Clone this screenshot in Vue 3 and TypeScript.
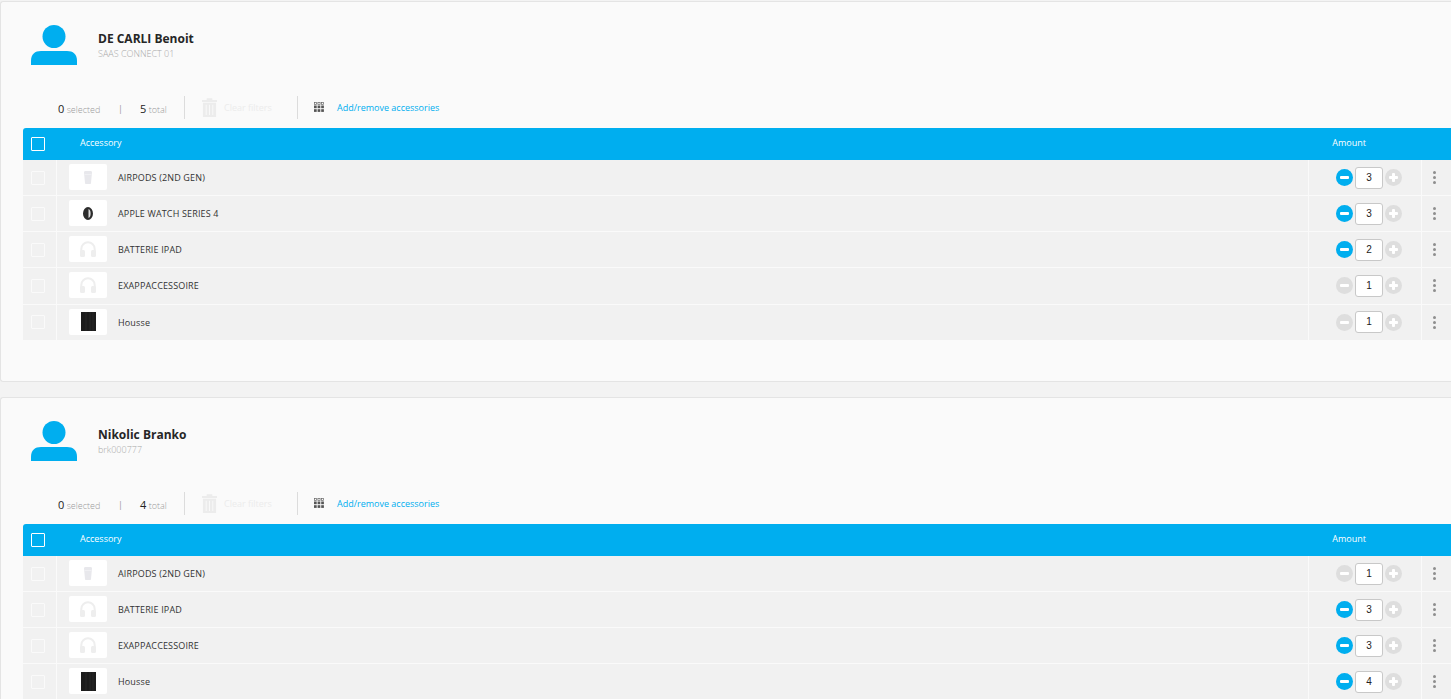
<script setup lang="ts">
interface Row { name: string; amount: number; icon: string; minus: boolean }
interface Card { name: string; sub: string; total: number; rows: Row[] }
const cards: Card[] = [
  { name: 'DE CARLI Benoit', sub: 'SAAS CONNECT 01', total: 5, rows: [
    { name: 'AIRPODS (2ND GEN)', amount: 3, icon: 'pods', minus: true },
    { name: 'APPLE WATCH SERIES 4', amount: 3, icon: 'watch', minus: true },
    { name: 'BATTERIE IPAD', amount: 2, icon: 'phones', minus: true },
    { name: 'EXAPPACCESSOIRE', amount: 1, icon: 'phones', minus: false },
    { name: 'Housse', amount: 1, icon: 'case', minus: false },
  ] },
  { name: 'Nikolic Branko', sub: 'brk000777', total: 4, rows: [
    { name: 'AIRPODS (2ND GEN)', amount: 1, icon: 'pods', minus: false },
    { name: 'BATTERIE IPAD', amount: 3, icon: 'phones', minus: true },
    { name: 'EXAPPACCESSOIRE', amount: 3, icon: 'phones', minus: true },
    { name: 'Housse', amount: 4, icon: 'case', minus: true },
  ] },
]
</script>

<template>
  <div class="page">
    <section v-for="card in cards" :key="card.name" class="card">
      <header class="user">
        <svg class="avatar" width="46" height="40" viewBox="0 0 46 40">
          <circle cx="23" cy="11.5" r="11.5" fill="#00aeef" />
          <path d="M0 40V36C0 29 4 26 10 26H36C42 26 46 29 46 36V40Z" fill="#00aeef" />
        </svg>
        <div class="who">
          <div class="name">{{ card.name }}</div>
          <div class="sub">{{ card.sub }}</div>
        </div>
      </header>
      <div class="tools">
        <div class="count sel"><b>0</b> selected</div>
        <span class="pipe">|</span>
        <div class="count tot"><b>{{ card.total }}</b> total</div>
        <span class="vline first"></span>
        <svg class="trash" width="15" height="19" viewBox="0 0 16 20">
          <path fill="#ececec" d="M5 0H11V2H16V4H0V2H5ZM1 5H15V20H1ZM4 7V18H5V7ZM7.500 7V18H8.500V7ZM11 7V18H12V7Z" fill-rule="evenodd" />
        </svg>
        <span class="clear">Clear filters</span>
        <span class="vline second"></span>
        <svg class="grid" width="10" height="10" viewBox="0 0 10 10">
          <g fill="none" stroke="#666" stroke-width=".7">
            <rect x=".4" y=".4" width="2.200" height="2" /><rect x="3.900" y=".4" width="2.200" height="2" /><rect x="7.400" y=".4" width="2.200" height="2" />
          </g>
          <g fill="#555">
            <rect y="3.500" width="2.700" height="2.700" /><rect x="3.600" y="3.500" width="2.700" height="2.700" /><rect x="7.200" y="3.500" width="2.700" height="2.700" />
            <rect y="7.200" width="2.700" height="2.700" /><rect x="3.600" y="7.200" width="2.700" height="2.700" /><rect x="7.200" y="7.200" width="2.700" height="2.700" />
          </g>
        </svg>
        <a class="add">Add/remove accessories</a>
      </div>
      <div class="table">
        <div class="thead">
          <span class="check head-check"></span>
          <span class="th-name">Accessory</span>
          <span class="th-amount">Amount</span>
        </div>
        <div v-for="row in card.rows" :key="row.name" class="row">
          <div class="c-check"><span class="check"></span></div>
          <div class="c-main">
            <div class="thumb">
              <svg v-if="row.icon === 'pods'" width="8" height="13" viewBox="0 0 8 13">
                <path d="M0 1.500C0 .5 .5 0 1.500 0H6.500C7.500 0 8 .5 8 1.500L7 12C7 12.700 6.500 13 6 13H2C1.500 13 1 12.700 1 12Z" fill="#e8e8ec" />
                <rect x=".5" y="3" width="7" height=".6" fill="#f6f6f8" />
              </svg>
              <svg v-else-if="row.icon === 'watch'" width="10" height="13" viewBox="0 0 10 13">
                <ellipse cx="5" cy="6.500" rx="5" ry="6.500" fill="#2c2c2c" /><path d="M5.500 2C7.200 2.600 7.600 4.500 7.600 6.500S7.200 10.400 5.500 11Z" fill="#dcdcdc" />
              </svg>
              <svg v-else-if="row.icon === 'phones'" width="16" height="16" viewBox="0 0 16 16">
                <path d="M1.300 11V8a6.700 6.700 0 0 1 13.400 0v3" fill="none" stroke="#eeeeee" stroke-width="2" />
                <rect x="0" y="9" width="5" height="7" rx="1.500" fill="#eeeeee" /><rect x="11" y="9" width="5" height="7" rx="1.500" fill="#eeeeee" />
              </svg>
              <svg v-else width="15" height="19" viewBox="0 0 15 19">
                <rect width="15" height="19" fill="#1c1c1c" /><path d="M5 0V19M9 0V19M12 0V19" stroke="#262626" />
              </svg>
            </div>
            <span class="label">{{ row.name }}</span>
          </div>
          <div class="c-amount">
            <span class="round" :class="{ on: row.minus }"><i class="h"></i></span>
            <span class="qty">{{ row.amount }}</span>
            <span class="round"><i class="h"></i><i class="v"></i></span>
          </div>
          <div class="c-menu"><i></i><i></i><i></i></div>
        </div>
      </div>
    </section>
  </div>
</template>

<style>
html, body { margin: 0; height: 100%; overflow: hidden; background: #f3f3f3; }
</style>

<style scoped>
.page {
  font-family: "Open Sans", "Liberation Sans", sans-serif;
  padding: 1px 0 0 0;
  display: flex;
  flex-direction: column;
  gap: 15px;
  height: 698px;
  overflow: hidden;
}
.card {
  flex: none;
  height: 381px;
  box-sizing: border-box;
  background: #fafafa;
  border: 1px solid #e4e4e4;
  border-right: 0;
  border-radius: 3px 0 0 3px;
  padding-left: 22px;
}
.user { display: flex; align-items: flex-start; height: 65px; padding: 23px 0 0 8px; }
.avatar { flex: none; }
.who { margin-left: 21px; padding-top: 5px; }
.name { font-size: 12px; line-height: 18px; font-weight: 700; color: #262626; }
.sub { font-size: 9px; line-height: 12px; color: #a8a8a8; font-weight: 300; }
.tools { display: flex; align-items: center; height: 38px; padding-left: 35px; }
.count { font-size: 9px; color: #9a9a9a; white-space: nowrap; margin-top: -2px; font-weight: 300; }
.count b { font-size: 11px; font-weight: 400; color: #222; }
.sel { width: 60px; }
.pipe { font-size: 9px; color: #999; width: 22px; margin-top: -2px; }
.tot { width: 44px; }
.vline { width: 1px; height: 23px; background: #dcdcdc; flex: none; margin-top: -3px; }
.trash { margin: -3px 0 0 17px; flex: none; }
.clear { font-size: 9px; color: #ececec; margin: -3px 0 0 7px; width: 73px; white-space: nowrap; }
.grid { margin: -5px 0 0 16px; flex: none; }
.add { font-size: 9px; color: #00aeef; margin: -3px 0 0 13px; white-space: nowrap; }
.table { font-size: 9px; }
.thead { height: 32px; background: #00aeef; color: #fff; display: flex; align-items: center; border-radius: 3px 0 0 0; }
.check { width: 12px; height: 12px; display: block; border: 1px solid #fafafa; border-radius: 1px; }
.head-check { margin-left: 8px; border-color: #fff; flex: none; }
.th-name { margin-left: 35px; margin-top: -3px; }
.th-amount { margin-left: auto; margin-right: 85px; margin-top: -3px; }
.row { height: 35.130px; margin-bottom: 1px; background: #f1f1f1; display: flex; align-items: stretch; }
.c-check { width: 34px; border-right: 1px solid #fafafa; display: flex; align-items: center; padding-left: 8px; box-sizing: border-box; flex: none; }
.c-main { flex: 1; display: flex; align-items: center; padding-left: 12px; min-width: 0; }
.thumb { width: 38px; height: 26px; margin-top: -1px; background: #fff; border-radius: 2px; display: flex; align-items: center; justify-content: center; flex: none; }
.label { margin-left: 11px; color: #333; letter-spacing: .15px; }
.c-amount { width: 114px; box-sizing: border-box; border-left: 1px solid #fafafa; border-right: 1px solid #fafafa; padding-left: 27px; display: flex; align-items: center; gap: 2px; flex: none; }
.round { width: 17px; height: 17px; border-radius: 50%; background: #dedede; position: relative; display: block; flex: none; }
.round.on { background: #00aeef; }
.round i { position: absolute; background: #fff; border-radius: 1px; }
.h { left: 4px; right: 4px; top: 7px; height: 3px; }
.v { top: 4px; bottom: 4px; left: 7px; width: 3px; }
.qty { width: 26px; height: 20px; background: #fff; border: 1px solid #c8c8c8; border-radius: 3px; text-align: center; line-height: 20px; font-size: 10px; color: #222; font-family: "Liberation Sans", sans-serif; flex: none; }
.c-menu { width: 29px; flex: none; box-sizing: border-box; padding-right: 4px; display: flex; flex-direction: column; align-items: center; justify-content: center; gap: 2px; }
.c-menu i { width: 3px; height: 3px; border-radius: 50%; background: #8e8e8e; }
</style>
